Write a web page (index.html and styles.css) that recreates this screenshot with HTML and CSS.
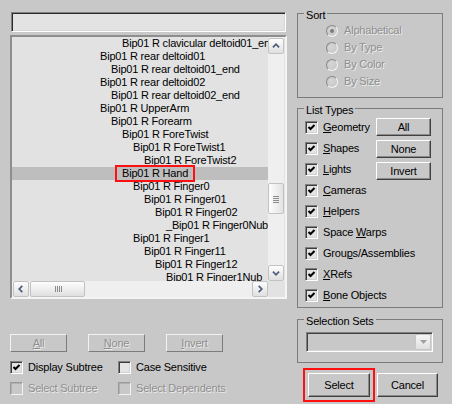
FILE: index.html
```
<!DOCTYPE html>
<html>
<head>
<meta charset="utf-8">
<link rel="stylesheet" href="styles.css">
</head>
<body>
<div class="app">
  <div class="left">
    <div class="search"></div>
    <div class="list">
      <div class="items">
        <div class="item lv2">Bip01 R clavicular deltoid01_end</div>
        <div class="item lv0">Bip01 R rear deltoid01</div>
        <div class="item lv1">Bip01 R rear deltoid01_end</div>
        <div class="item lv0">Bip01 R rear deltoid02</div>
        <div class="item lv1">Bip01 R rear deltoid02_end</div>
        <div class="item lv0">Bip01 R UpperArm</div>
        <div class="item lv1">Bip01 R Forearm</div>
        <div class="item lv2">Bip01 R ForeTwist</div>
        <div class="item lv3">Bip01 R ForeTwist1</div>
        <div class="item lv4">Bip01 R ForeTwist2</div>
        <div class="item lv2 sel"><span class="hl">Bip01 R Hand</span></div>
        <div class="item lv3">Bip01 R Finger0</div>
        <div class="item lv4">Bip01 R Finger01</div>
        <div class="item lv5">Bip01 R Finger02</div>
        <div class="item lv6">_Bip01 R Finger0Nub</div>
        <div class="item lv3">Bip01 R Finger1</div>
        <div class="item lv4">Bip01 R Finger11</div>
        <div class="item lv5">Bip01 R Finger12</div>
        <div class="item lv6">Bip01 R Finger1Nub</div>
      </div>
      <div class="vscroll">
        <div class="sb up"><svg width="16" height="16" viewBox="0 0 16 16"><polyline points="4.5,9.5 8,6 11.5,9.5" fill="none" stroke="#4e5d7c" stroke-width="2"/></svg></div>
        <div class="vtrack"><div class="thumb vthumb"><svg width="8" height="8" viewBox="0 0 8 8"><path d="M1 1.5h6M1 3.5h6M1 5.5h6M1 7.5h6" stroke="#8b8b8b" stroke-width="1"/></svg></div></div>
        <div class="sb"><svg width="16" height="16" viewBox="0 0 16 16"><polyline points="4.5,6.5 8,10 11.5,6.5" fill="none" stroke="#4e5d7c" stroke-width="2"/></svg></div>
      </div>
      <div class="hscroll">
        <div class="sb lt"><svg width="16" height="16" viewBox="0 0 16 16"><polyline points="9.5,4.5 6,8 9.5,11.5" fill="none" stroke="#4e5d7c" stroke-width="2"/></svg></div>
        <div class="htrack"><div class="thumb hthumb"><svg width="8" height="8" viewBox="0 0 8 8"><path d="M1.5 1v6M3.5 1v6M5.5 1v6M7.5 1v6" stroke="#8b8b8b" stroke-width="1"/></svg></div></div>
        <div class="sb"><svg width="16" height="16" viewBox="0 0 16 16"><polyline points="6.5,4.5 10,8 6.5,11.5" fill="none" stroke="#4e5d7c" stroke-width="2"/></svg></div>
      </div>
      <div class="corner"></div>
    </div>
    <div class="btnrow">
      <button class="btn small dis"><u>A</u>ll</button>
      <button class="btn small dis"><u>N</u>one</button>
      <button class="btn small dis"><u>I</u>nvert</button>
    </div>
    <div class="opts">
      <div class="cb"><span class="box"><svg width="9" height="9" viewBox="0 0 9 9"><path d="M1.5 4 L3.5 6 L7.5 2" fill="none" stroke="#000" stroke-width="2"/></svg></span><span>Display Subtree</span></div>
      <div class="cb"><span class="box"></span><span>Case Sensitive</span></div>
      <div class="cb dis"><span class="box off"></span><span>Select Subtree</span></div>
      <div class="cb dis"><span class="box off"></span><span>Select Dependents</span></div>
    </div>
  </div>

  <div class="right">
    <div class="group sort">
      <div class="gtitle">Sort</div>
      <div class="radios">
        <div class="rrow dis"><span class="radio"><span class="dot"></span></span><span>Alphabetical</span></div>
        <div class="rrow dis"><span class="radio"></span><span>By Type</span></div>
        <div class="rrow dis"><span class="radio"></span><span>By Color</span></div>
        <div class="rrow dis"><span class="radio"></span><span>By Size</span></div>
      </div>
    </div>

    <div class="group ltypes">
      <div class="gtitle">List Types</div>
      <div class="types">
        <div class="tbtns">
          <button class="btn tbtn">All</button>
          <button class="btn tbtn">None</button>
          <button class="btn tbtn">Invert</button>
        </div>
        <div class="cb tcb"><span class="box"><svg width="9" height="9" viewBox="0 0 9 9"><path d="M1.5 4 L3.5 6 L7.5 2" fill="none" stroke="#000" stroke-width="2"/></svg></span><span><u>G</u>eometry</span></div>
        <div class="cb tcb"><span class="box"><svg width="9" height="9" viewBox="0 0 9 9"><path d="M1.5 4 L3.5 6 L7.5 2" fill="none" stroke="#000" stroke-width="2"/></svg></span><span><u>S</u>hapes</span></div>
        <div class="cb tcb"><span class="box"><svg width="9" height="9" viewBox="0 0 9 9"><path d="M1.5 4 L3.5 6 L7.5 2" fill="none" stroke="#000" stroke-width="2"/></svg></span><span><u>L</u>ights</span></div>
        <div class="cb tcb"><span class="box"><svg width="9" height="9" viewBox="0 0 9 9"><path d="M1.5 4 L3.5 6 L7.5 2" fill="none" stroke="#000" stroke-width="2"/></svg></span><span><u>C</u>ameras</span></div>
        <div class="cb tcb"><span class="box"><svg width="9" height="9" viewBox="0 0 9 9"><path d="M1.5 4 L3.5 6 L7.5 2" fill="none" stroke="#000" stroke-width="2"/></svg></span><span><u>H</u>elpers</span></div>
        <div class="cb tcb"><span class="box"><svg width="9" height="9" viewBox="0 0 9 9"><path d="M1.5 4 L3.5 6 L7.5 2" fill="none" stroke="#000" stroke-width="2"/></svg></span><span>Space <u>W</u>arps</span></div>
        <div class="cb tcb"><span class="box"><svg width="9" height="9" viewBox="0 0 9 9"><path d="M1.5 4 L3.5 6 L7.5 2" fill="none" stroke="#000" stroke-width="2"/></svg></span><span>Grou<u>p</u>s/Assemblies</span></div>
        <div class="cb tcb"><span class="box"><svg width="9" height="9" viewBox="0 0 9 9"><path d="M1.5 4 L3.5 6 L7.5 2" fill="none" stroke="#000" stroke-width="2"/></svg></span><span><u>X</u>Refs</span></div>
        <div class="cb tcb"><span class="box"><svg width="9" height="9" viewBox="0 0 9 9"><path d="M1.5 4 L3.5 6 L7.5 2" fill="none" stroke="#000" stroke-width="2"/></svg></span><span><u>B</u>one Objects</span></div>
      </div>
    </div>

    <div class="group ssets">
      <div class="gtitle">Selection Sets</div>
      <div class="combo">
        <div class="cbtn"><svg width="9" height="5" viewBox="0 0 9 5"><polygon points="1,0 8,0 4.5,4" fill="#a0a0a0"/></svg></div>
      </div>
    </div>

    <div class="actions">
      <button class="btn act select">Select</button>
      <button class="btn act">Cancel</button>
    </div>
  </div>
</div>
</body>
</html>
```
FILE: styles.css
```
html, body {
  margin: 0;
  padding: 0;
}
body {
  width: 452px;
  height: 404px;
  overflow: hidden;
  background: #c8c8c8;
  color: #000;
  font-family: "Liberation Sans", Arial, sans-serif;
  font-size: 11px;
  line-height: 13px;
  letter-spacing: -0.2px;
}
.app {
  display: flex;
  gap: 10px;
  padding-left: 10px;
}

/* left column */
.left {
  width: 277px;
  display: flex;
  flex-direction: column;
}
.search {
  margin: 12px 1px 0;
  height: 20px;
  box-sizing: border-box;
  border: 1px solid;
  border-color: #808080 #ffffff #ffffff #808080;
  box-shadow: inset 1px 1px #2a2a2a, inset -1px -1px #d6d6d6;
  background: #e3e3e3;
}
.list {
  margin-top: 3px;
  height: 264px;
  box-sizing: border-box;
  border: 2px solid;
  border-color: #8e8e8e #f4f4f4 #f4f4f4 #8e8e8e;
  background: #e2e2e2;
  display: grid;
  grid-template-columns: 256px 17px;
  grid-template-rows: 244px 16px;
}
.items {
  overflow: hidden;
  white-space: nowrap;
}
.item {
  height: 13px;
  line-height: 13px;
}
.lv0 { padding-left: 88px; }
.lv1 { padding-left: 99px; }
.lv2 { padding-left: 110px; }
.lv3 { padding-left: 121px; }
.lv4 { padding-left: 132px; }
.lv5 { padding-left: 143px; }
.lv6 { padding-left: 154px; }
.sel {
  background: #bebebe;
}
.hl {
  display: inline-block;
  height: 13px;
  margin-left: -5px;
  padding: 0 5px;
  outline: 2px solid #ff1010;
}

.vscroll {
  grid-column: 2;
  grid-row: 1;
  width: 16px;
  display: flex;
  flex-direction: column;
  background: #efefef;
}
.hscroll {
  grid-column: 1;
  grid-row: 2;
  display: flex;
  background: #efefef;
}
.corner {
  grid-column: 2;
  grid-row: 2;
  background: #e2e2e2;
}
.sb, .thumb {
  box-sizing: border-box;
  border: 1px solid #c2c2c2;
  border-radius: 2px;
  background: linear-gradient(#fdfdfd, #e0e0e0);
  display: flex;
  align-items: center;
  justify-content: center;
}
.sb {
  width: 16px;
  height: 16px;
  flex: none;
}
.sb.up { margin-top: 1px; }
.sb.lt { margin-left: 1px; }
.vtrack {
  flex: 1;
  padding-top: 129px;
}
.vthumb {
  height: 31px;
  background: linear-gradient(90deg, #fdfdfd, #e2e2e2);
}
.htrack {
  flex: 1;
  padding-left: 1px;
}
.hthumb {
  width: 55px;
  height: 16px;
}

/* buttons */
.btn {
  box-sizing: border-box;
  margin: 0;
  padding: 0;
  border: 1px solid;
  border-color: #ffffff #404040 #404040 #ffffff;
  box-shadow: inset -1px -1px #8a8a8a;
  background: #c8c8c8;
  font: inherit;
  letter-spacing: inherit;
  color: #000;
  text-align: center;
}
.btn u { text-decoration: underline; }
.small {
  width: 57px;
  height: 18px;
}
.btnrow {
  display: flex;
  gap: 21px;
  margin-top: 35px;
}
.dis, .btn.dis {
  color: #8f8f8f;
  text-shadow: 1px 1px 0 #ececec;
}
.btn.dis {
  border-color: #f2f2f2 #7c7c7c #7c7c7c #f2f2f2;
  box-shadow: none;
}

/* checkboxes */
.opts {
  display: grid;
  grid-template-columns: 108px 108px;
  grid-auto-rows: 21px;
  margin-top: 5px;
}
.cb {
  display: flex;
  align-items: center;
  gap: 5px;
  white-space: nowrap;
}
.box {
  flex: none;
  width: 13px;
  height: 13px;
  box-sizing: border-box;
  border: 1px solid;
  border-color: #808080 #ffffff #ffffff #808080;
  box-shadow: inset 1px 1px #3c3c3c, inset -1px -1px #d2d2d2;
  background: #e4e4e4;
  display: flex;
  align-items: center;
  justify-content: center;
}
.box.off {
  border-color: #9a9a9a #f2f2f2 #f2f2f2 #9a9a9a;
  box-shadow: inset 1px 1px #b0b0b0;
  background: #c8c8c8;
}

/* right column */
.right {
  width: 146px;
  display: flex;
  flex-direction: column;
}
.group {
  border: 1px solid #7c7c7c;
}
.gtitle {
  width: fit-content;
  height: 13px;
  line-height: 13px;
  margin: -5px 0 0 6px;
  padding: 0 2px;
  background: #c8c8c8;
  white-space: nowrap;
}
.sort {
  margin-top: 13px;
  padding-bottom: 7px;
}
.radios {
  padding-left: 28px;
}
.rrow {
  height: 17px;
  display: flex;
  align-items: center;
  gap: 6px;
}
.radio {
  flex: none;
  width: 12px;
  height: 12px;
  box-sizing: border-box;
  border-radius: 50%;
  border: 1px solid;
  border-color: #878787 #f4f4f4 #f4f4f4 #878787;
  background: radial-gradient(circle at 40% 40%, #d6d6d6, #c4c4c4);
  display: flex;
  align-items: center;
  justify-content: center;
}
.dot {
  width: 4px;
  height: 4px;
  border-radius: 50%;
  background: #7a7a7a;
}
.ltypes {
  margin-top: 10px;
}
.types {
  display: grid;
  grid-template-columns: 71px 55px;
  grid-auto-rows: 21px;
  padding: 0 0 1px 7px;
}
.tbtns {
  grid-column: 2;
  grid-row: 1 / span 3;
  display: flex;
  flex-direction: column;
  gap: 4px;
  margin-top: 1px;
}
.tbtn {
  width: 55px;
  height: 18px;
}
.tcb {
  grid-column: 1;
}
.ssets {
  margin-top: 11px;
  padding-bottom: 10px;
}
.combo {
  margin: 4px 0 0 8px;
  width: 127px;
  height: 20px;
  box-sizing: border-box;
  border: 1px solid;
  border-color: #808080 #ffffff #ffffff #808080;
  box-shadow: inset 1px 1px #404040, inset -1px -1px #d4d4d4;
  background: #c8c8c8;
  display: flex;
  justify-content: flex-end;
  padding: 1px;
}
.cbtn {
  width: 16px;
  height: 16px;
  box-sizing: border-box;
  border: 1px solid #c6c6c6;
  border-radius: 2px;
  background: linear-gradient(#f6f6f6, #e0e0e0);
  display: flex;
  align-items: center;
  justify-content: center;
}
.actions {
  display: flex;
  gap: 7px;
  margin: 10px 0 0 11px;
}
.act {
  width: 61px;
  height: 24px;
}
.select {
  width: 62px;
  outline: 2px solid #ff1010;
  outline-offset: 3px;
}
```
